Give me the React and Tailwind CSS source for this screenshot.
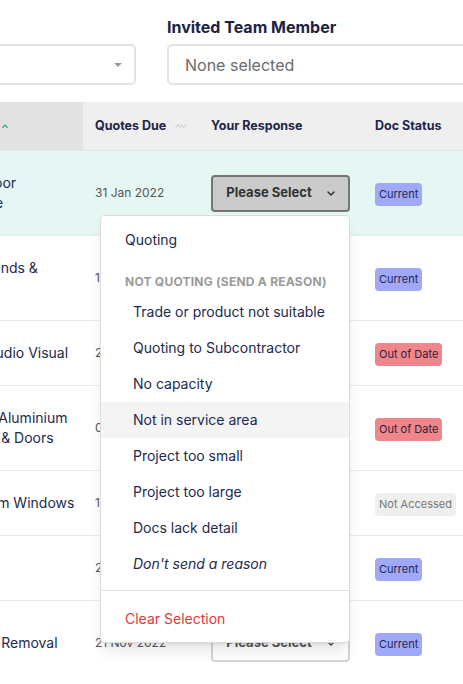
import React from 'react';

const rows = [
  { name: ['Hardwood Floor', 'with Staircase'], date: '31 Jan 2022', status: 'current', highlight: true, resp: 'open' },
  { name: ['Motorised  Blinds &', 'Shutters'], date: '14 Feb 2022', status: 'current', resp: 'select' },
  { name: ['Residential Audio Visual'], date: '28 Feb 2022', status: 'outdated', resp: 'select' },
  { name: ['Architectural Aluminium', 'Curtain Walls & Doors'], date: '07 Mar 2022', status: 'outdated', resp: 'select' },
  { name: ['Pro  Aluminium Windows'], date: '15 Mar 2022', status: 'none', resp: 'quoting' },
  { name: ['Painting'], date: '25 Apr 2022', status: 'current', resp: 'select' },
  { name: ['Demolition &  Removal'], date: '21 Nov 2022', status: 'current', resp: 'select', tall: true },
];

const reasons = [
  'Trade or product not suitable',
  'Quoting to Subcontractor',
  'No capacity',
  'Not in service area',
  'Project too small',
  'Project too large',
  'Docs lack detail',
];

function Chevron({ className }) {
  return (
    <svg className={className} width="8" height="5" viewBox="0 0 8 5" fill="none">
      <path d="M1 1l3 3 3-3" stroke="currentColor" strokeWidth="1.5" strokeLinecap="round" strokeLinejoin="round" />
    </svg>
  );
}

function Badge({ status }) {
  if (status === 'current')
    return <span className="inline-block rounded-[4px] bg-[#a0a9f8] px-1 py-1 text-[11px] leading-[15px] text-[#1f2550]">Current</span>;
  if (status === 'outdated')
    return <span className="inline-block rounded-[4px] bg-[#f0868b] px-1 py-1 text-[11px] leading-[15px] text-[#2a1f3a]">Out of Date</span>;
  return <span className="inline-block rounded-[4px] bg-[#efefef] px-1 py-1 text-[11px] leading-[15px] text-[#777]">Not Accessed</span>;
}

function ResponseButton({ kind }) {
  let cls = 'bg-white border-[#d4d4d4] text-[#555]';
  let label = 'Please Select';
  if (kind === 'open') cls = 'bg-[#cbcbcb] border-[#757575] text-[#333]';
  if (kind === 'quoting') {
    cls = 'bg-white border-[#2ea56b] text-[#2ea56b]';
    label = 'Quoting';
  }
  return (
    <button className={`flex h-[37px] w-[139px] items-center justify-center gap-[15px] rounded-[4px] border-2 text-[13px] font-bold ${cls}`}>
      {label}
      <Chevron />
    </button>
  );
}

function Dropdown() {
  return (
    <div className="absolute right-0 top-full z-10 mt-[3px] w-[250px] rounded-[4px] border border-[#dcdcdc] bg-white pt-[6px] pb-[5px] text-sm text-[#232a50] shadow-lg">
      <div className="flex h-9 items-center pl-6">Quoting</div>
      <div className="pl-6 pt-4 pb-1 text-xs font-bold uppercase leading-4 tracking-[0.02em] text-[#9a9a9a]">Not quoting (send a reason)</div>
      {reasons.map((r) => (
        <div key={r} className={`flex h-9 items-center pl-8 ${r === 'Not in service area' ? 'bg-[#f4f4f4]' : ''}`}>
          {r}
        </div>
      ))}
      <div className="flex h-9 items-center pl-8 italic">Don't send a reason</div>
      <div className="mt-2 border-t border-[#e0e0e0]" />
      <div className="mt-[10px] flex h-9 items-center pl-6 text-[#e03a3a]">Clear Selection</div>
    </div>
  );
}

export default function App() {
  return (
    <div className="h-[684px] w-[463px] overflow-hidden bg-white font-['Inter',sans-serif]">
      <div className="-ml-[102px] w-[800px]">
        {/* Filters */}
        <div className="flex gap-[31px] pt-[15px]">
          <div className="ml-6 w-[214px]">
            <div className="h-6" />
            <div className="mt-[5px] flex h-[41px] items-center justify-end rounded-[5px] border-2 border-[#e3e3e3] pr-3">
              <span className="h-0 w-0 border-l-[4px] border-r-[4px] border-t-[4px] border-l-transparent border-r-transparent border-t-[#9a9a9a]" />
            </div>
          </div>
          <div className="w-[400px]">
            <div className="text-base font-bold leading-6 text-[#1c2340]">Invited Team Member</div>
            <div className="mt-[5px] flex h-[41px] items-center rounded-[5px] border-2 border-[#e3e3e3] pl-4 text-base text-[#6b6b6b]">
              None selected
            </div>
          </div>
        </div>

        {/* Table */}
        <table className="mt-[17px] w-[700px] table-fixed border-collapse">
          <colgroup>
            <col className="w-[185px]" />
            <col className="w-[116px]" />
            <col className="w-[164px]" />
            <col className="w-[235px]" />
          </colgroup>
          <thead>
            <tr className="border-b border-[#e6e6e6] bg-[#efefef] text-left text-[12.5px] font-bold leading-5 text-[#1f2547] whitespace-nowrap">
              <th className="bg-[#e2e2e2] px-3 py-[14px]">
                <div className="flex items-center justify-end pr-[63px]">
                  <svg width="6" height="4" viewBox="0 0 6 4" fill="none">
                    <path d="M0.8 3.2L3 1l2.2 2.2" stroke="#3bb273" strokeWidth="1.4" strokeLinecap="round" strokeLinejoin="round" />
                  </svg>
                </div>
              </th>
              <th className="px-3 py-[14px]">
                <div className="flex items-center gap-[9px]">
                  Quotes Due
                  <svg width="13" height="6" viewBox="0 0 13 6" fill="none">
                    <path d="M1 4.5L3.5 1.5 6 4.5M7 1.5l2.5 3 2.5-3" stroke="#bdbdbd" strokeWidth="1.1" strokeLinecap="round" strokeLinejoin="round" />
                  </svg>
                </div>
              </th>
              <th className="px-3 py-[14px]">Your Response</th>
              <th className="px-3 py-[14px]">Doc Status</th>
            </tr>
          </thead>
          <tbody>
            {rows.map((row, i) => (
              <tr key={i} className={`border-b border-[#ebebeb] ${row.highlight ? 'bg-[#e6f7f3]' : ''}`}>
                <td className={`px-3 align-middle text-sm leading-5 text-[#232a4d] ${row.tall ? 'py-8' : 'py-[22px]'}`}>
                  {row.name.map((line) => (
                    <div key={line} className="whitespace-pre">{line}</div>
                  ))}
                </td>
                <td className="px-3 align-middle text-xs text-[#575757]">{row.date}</td>
                <td className="px-3 align-middle">
                  <div className="relative w-[139px]">
                    <ResponseButton kind={row.resp} />
                    {row.resp === 'open' && <Dropdown />}
                  </div>
                </td>
                <td className="px-3 align-middle">
                  <Badge status={row.status} />
                </td>
              </tr>
            ))}
          </tbody>
        </table>
      </div>
    </div>
  );
}
